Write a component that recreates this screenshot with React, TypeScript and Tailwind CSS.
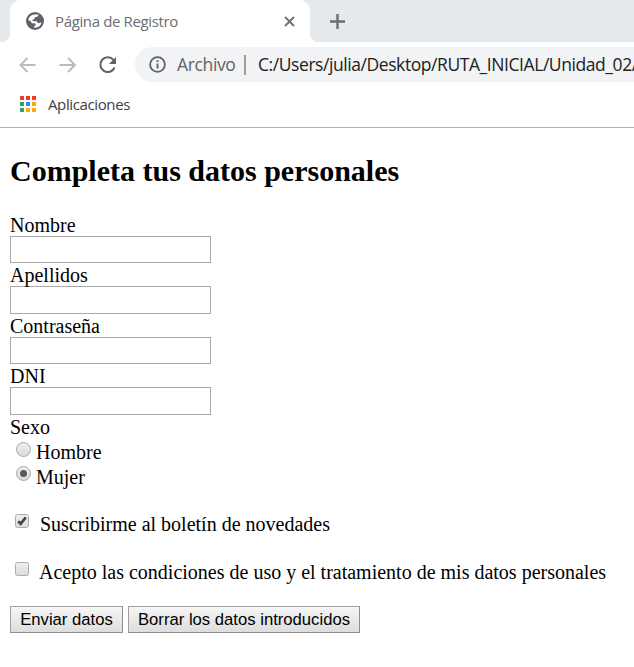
import React from "react";

const segoe = "font-['Open_Sans','Noto_Sans',sans-serif]";
const appColors = ["#f5372f", "#f5372f", "#f5372f", "#2fa558", "#2f8af5", "#fbab05", "#2fa558", "#fbab05", "#fbab05"];

function Field({ label, box }: { label: string; box: string }) {
  return (
    <label className="block">
      <span className="block h-[23px] leading-[25px]">{label}</span>
      <input className={`block w-[201px] border border-[#a9a9a9] bg-white ${box}`} />
    </label>
  );
}

function Radio({ checked = false }: { checked?: boolean }) {
  return (
    <span className="flex size-[15px] items-center justify-center rounded-full border border-[#a8a8a8] bg-linear-to-b from-[#eeeeee] to-[#dcdcdc]">
      {checked && <span className="size-[7px] rounded-full bg-[#5a5a5a]" />}
    </span>
  );
}

function Check({ checked = false }: { checked?: boolean }) {
  return (
    <span className="flex size-[14px] items-center justify-center rounded-[2.5px] border border-[#acacac] bg-linear-to-b from-[#eeeeee] to-[#dcdcdc]">
      {checked && (
        <svg width="12" height="12" viewBox="0 0 12 12" className="shrink-0">
          <path d="M2.2 6.2 4.7 8.8 9.8 2.4" fill="none" stroke="#444" strokeWidth="2.7" />
        </svg>
      )}
    </span>
  );
}

const button =
  "h-[27px] border border-[#a0a0a0] border-b-[#8e8e8e] border-r-[#8e8e8e] bg-linear-to-b from-[#f6f6f6] to-[#dddddd] text-center font-['Liberation_Sans',Arial,sans-serif] text-[16.67px] leading-[25px] whitespace-nowrap";

export default function App() {
  return (
    <div className="h-[667px] w-[634px] overflow-hidden bg-white">
      <header className={segoe}>
        <div className="flex h-[42px] bg-white">
          <div className="w-[10px] rounded-br-[8px] bg-[#e5e9ec]" />
          <div className="flex w-[300px] items-center bg-linear-to-b from-[#e5e9ec] from-50% to-white to-50%">
            <div className="flex h-full w-full items-center rounded-t-[10px] bg-white pl-[15px]">
              <svg width="20" height="20" viewBox="0 0 20 20">
                <circle cx="10" cy="10" r="9" fill="#5f6368" />
                <path
                  fill="#fff"
                  d="M3.300 9.600C3.500 6.300 6 4 9.200 3.500L13.700 3.600 12.300 5.800 9.800 6.300 9.200 8.200 7.300 8.800 8 10.200 11.800 10.200 13 12.200 16.500 11.600C15.900 14.800 13 17 9.300 16.700L9.300 15 11 13.900 9.900 12.300 6.800 12.200 5.300 9.800z"
                />
              </svg>
              <span className="ml-[10px] text-[15px] tracking-[-0.36px] whitespace-nowrap text-[#6a6e72]">Página de Registro</span>
              <svg width="11" height="11" viewBox="0 0 11 11" className="mr-[15px] ml-auto">
                <path d="M1 1 10 10M10 1 1 10" stroke="#6c7074" strokeWidth="1.9" />
              </svg>
            </div>
          </div>
          <div className="flex flex-1 items-center rounded-bl-[8px] bg-[#e5e9ec] pl-[20px]">
            <svg width="15" height="15" viewBox="0 0 15 15">
              <path d="M7.500 0v15M0 7.500h15" stroke="#6a6e71" strokeWidth="2.400" />
            </svg>
          </div>
        </div>

        <div className="flex h-[45px] items-center">
          <svg width="135" height="36" viewBox="0 0 135 36" fill="none" className="shrink-0">
            <path d="M35.500 18H21M27.500 11 20.500 18l7 7" stroke="#b9bbbd" strokeWidth="1.900" />
            <path d="M59.500 18H74M68 11l7 7-7 7" stroke="#b9bbbd" strokeWidth="1.900" />
            <path d="M113.500 13A7.400 7.400 0 1 0 114.600 20.500" stroke="#5f6368" strokeWidth="2" />
            <path d="M116 10v7h-7z" fill="#5f6368" />
          </svg>
          <div className="flex h-[35px] flex-1 items-center overflow-hidden rounded-l-full bg-[#f1f3f4] pl-[14px]">
            <svg width="17" height="17" viewBox="0 0 17 17" className="shrink-0">
              <circle cx="8.500" cy="8.500" r="7.400" fill="none" stroke="#5f6368" strokeWidth="1.800" />
              <path d="M8.500 7.600v5M8.500 4.200v1.900" stroke="#5f6368" strokeWidth="1.900" />
            </svg>
            <span className="ml-[11px] w-[59px] shrink-0 text-[17.500px] tracking-[-0.360px] whitespace-nowrap text-[#5f6368]">Archivo</span>
            <span className="ml-[8px] h-[20px] w-[2px] shrink-0 bg-[#9a9da0]" />
            <span className="ml-[12px] text-[17.500px] tracking-[-0.430px] whitespace-nowrap text-[#202124]">
              C:/Users/julia/Desktop/RUTA_INICIAL/Unidad_02/
            </span>
          </div>
        </div>

        <div className="flex h-[41px] items-center border-b border-[#b0b0b0] pl-[20px]">
          <span className="mb-[6px] grid grid-cols-3 gap-[2px]">
            {appColors.map((c, i) => (
              <span key={i} className="size-[4px]" style={{ backgroundColor: c }} />
            ))}
          </span>
          <span className="mb-[5px] ml-[12px] text-[15px] tracking-[-0.380px] text-[#3c4043]">Aplicaciones</span>
        </div>
      </header>

      <main className="pl-[10px] font-['Liberation_Serif','Times_New_Roman',serif] text-[20px] text-black">
        <h2 className="pt-[26px] text-[30px] leading-[34px] font-bold">Completa tus datos personales</h2>
        <form className="pt-[25px]">
          <Field label="Nombre" box="h-[27px]" />
          <Field label="Apellidos" box="h-[28px]" />
          <Field label="Contraseña" box="h-[27px]" />
          <Field label="DNI" box="h-[28px]" />
          <div className="h-[25px] leading-[25px]">Sexo</div>
          <div className="flex h-[25px] items-start pl-[6px] leading-[25px]">
            <span className="pt-[2px]"><Radio /></span>
            <span className="ml-[5px]">Hombre</span>
          </div>
          <div className="flex h-[24px] items-start pl-[6px] leading-[25px]">
            <span className="pt-[1px]"><Radio checked /></span>
            <span className="ml-[5px]">Mujer</span>
          </div>
          <div className="mt-[23px] flex h-[23px] items-start pl-[5px] leading-[25px]">
            <span className="pt-[2px]"><Check checked /></span>
            <span className="ml-[11px]">Suscribirme al boletín de novedades</span>
          </div>
          <div className="mt-[25px] flex h-[23px] items-start pl-[5px] leading-[25px]">
            <span className="pt-[2px]"><Check /></span>
            <span className="ml-[10px]">Acepto las condiciones de uso y el tratamiento de mis datos personales</span>
          </div>
          <div className="mt-[23px] flex gap-[5px]">
            <button type="button" className={`${button} w-[113px]`}>Enviar datos</button>
            <button type="button" className={`${button} w-[232px]`}>Borrar los datos introducidos</button>
          </div>
        </form>
      </main>
    </div>
  );
}
